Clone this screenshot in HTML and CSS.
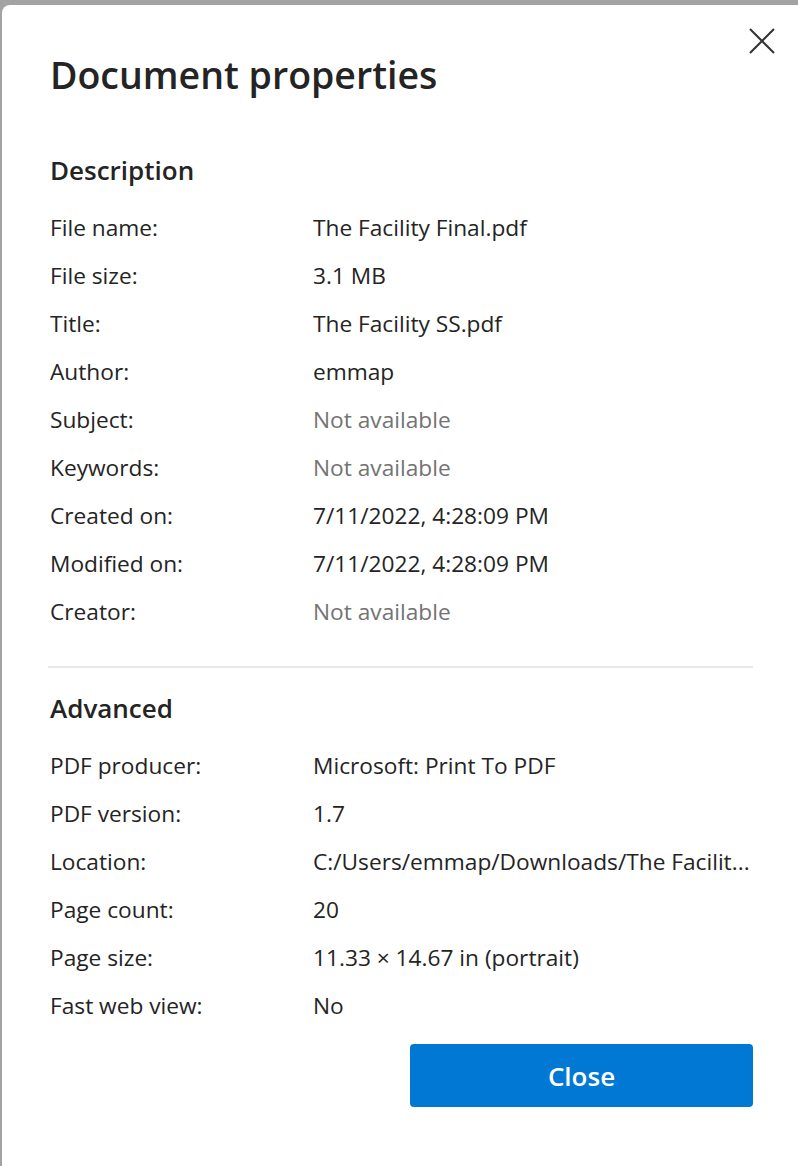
FILE: index.html
```html
<!DOCTYPE html>
<html>
<head>
<meta charset="utf-8">
<link rel="stylesheet" href="styles.css">
</head>
<body>
<div class="dialog">
  <button class="close-x" aria-label="Close">
    <svg width="26" height="26" viewBox="0 0 26 26"><path d="M1 1 L25 25 M25 1 L1 25" stroke="#333" stroke-width="2" fill="none"/></svg>
  </button>
  <h1 class="title">Document properties</h1>
  <h2 class="section">Description</h2>
  <div class="rows">
    <div class="row"><span class="label">File name:</span><span class="value">The Facility Final.pdf</span></div>
    <div class="row"><span class="label">File size:</span><span class="value">3.1 MB</span></div>
    <div class="row"><span class="label">Title:</span><span class="value">The Facility SS.pdf</span></div>
    <div class="row"><span class="label">Author:</span><span class="value">emmap</span></div>
    <div class="row"><span class="label">Subject:</span><span class="value na">Not available</span></div>
    <div class="row"><span class="label">Keywords:</span><span class="value na">Not available</span></div>
    <div class="row"><span class="label">Created on:</span><span class="value">7/11/2022, 4:28:09 PM</span></div>
    <div class="row"><span class="label">Modified on:</span><span class="value">7/11/2022, 4:28:09 PM</span></div>
    <div class="row"><span class="label">Creator:</span><span class="value na">Not available</span></div>
  </div>
  <hr class="divider">
  <h2 class="section adv">Advanced</h2>
  <div class="rows">
    <div class="row"><span class="label">PDF producer:</span><span class="value">Microsoft: Print To PDF</span></div>
    <div class="row"><span class="label">PDF version:</span><span class="value">1.7</span></div>
    <div class="row"><span class="label">Location:</span><span class="value">C:/Users/emmap/Downloads/The Facilit...</span></div>
    <div class="row"><span class="label">Page count:</span><span class="value">20</span></div>
    <div class="row"><span class="label">Page size:</span><span class="value">11.33 × 14.67 in (portrait)</span></div>
    <div class="row"><span class="label">Fast web view:</span><span class="value">No</span></div>
  </div>
  <div class="actions">
    <button class="btn-close">Close</button>
  </div>
</div>
</body>
</html>
```
FILE: styles.css
```css
html, body {
  margin: 0;
  padding: 0;
  height: 100%;
}
body {
  background: #a3a3a3;
  font-family: "Open Sans", "Noto Sans", sans-serif;
  color: #242424;
  padding: 5px 0 0 2px;
  box-sizing: border-box;
  overflow: hidden;
}
.dialog {
  position: relative;
  background: #fff;
  border-top-left-radius: 8px;
  height: 100%;
  padding: 0 45px 0 48px;
  box-sizing: border-box;
}
.close-x {
  position: absolute;
  top: 23px;
  right: 23px;
  width: 26px;
  height: 26px;
  padding: 0;
  border: 0;
  background: none;
  display: flex;
}
.title {
  margin: 0;
  padding-top: 48px;
  font-size: 37.5px;
  font-weight: 600;
  line-height: 44px;
}
.section {
  margin: 0;
  padding-top: 56px;
  font-size: 26px;
  font-weight: 600;
  line-height: 34px;
}
.rows {
  display: flex;
  flex-direction: column;
  padding-top: 16px;
}
.row {
  display: grid;
  grid-template-columns: 263px 1fr;
  height: 48px;
  align-items: center;
  font-size: 22.7px;
  white-space: nowrap;
}
.na {
  color: #737373;
}
.divider {
  border: 0;
  height: 2px;
  background: #e8e8e8;
  margin: 31px 0 0 -2px;
}
.section.adv {
  padding-top: 23px;
}
.actions {
  display: flex;
  justify-content: flex-end;
  padding-top: 15px;
}
.btn-close {
  width: 343px;
  height: 63px;
  background: #0078d4;
  color: #fff;
  border: 0;
  border-radius: 4px;
  font-family: inherit;
  font-size: 26px;
  font-weight: 600;
}
```
